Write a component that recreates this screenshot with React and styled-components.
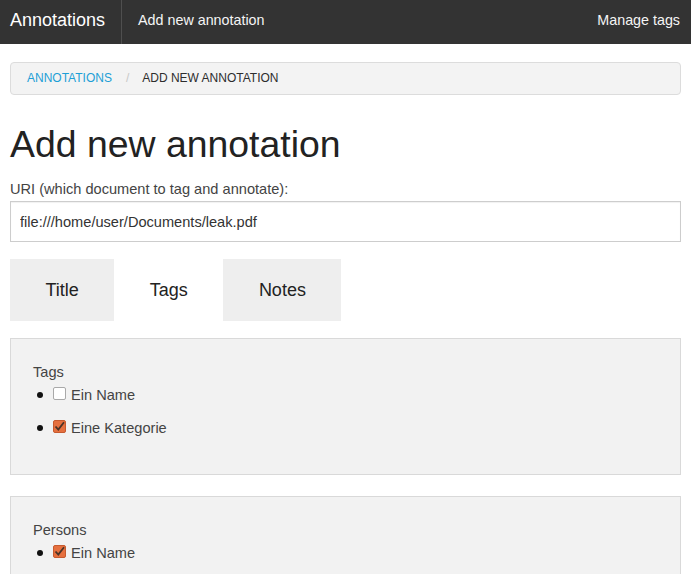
import React, { useState } from "react";
import styled, { createGlobalStyle } from "styled-components";

const GlobalStyle = createGlobalStyle`
  html, body {
    margin: 0;
    padding: 0;
    background: #fff;
    font-family: "Liberation Sans", Arial, Helvetica, sans-serif;
    font-size: 14.6px;
    color: #444;
  }
  * {
    box-sizing: border-box;
  }
`;

const Navbar = styled.nav`
  display: flex;
  align-items: stretch;
  height: 44px;
  background: #333;
  color: #fff;
`;

const Brand = styled.a`
  display: block;
  padding: 10px 16px 0 10px;
  font-size: 18px;
  line-height: 20px;
  color: #fff;
  text-decoration: none;
  border-right: 1px solid #4f4f4f;
`;

const NavLink = styled.a`
  display: block;
  padding: 10px ${(p) => (p.$right ? "11px" : "16px")} 0 16px;
  margin-left: ${(p) => (p.$right ? "auto" : "0")};
  font-size: 14.3px;
  line-height: 20px;
  color: #f5f5f5;
  text-decoration: none;
`;

const Container = styled.main`
  padding: 18px 10px 0;
`;

const Breadcrumb = styled.ol`
  display: flex;
  margin: 0;
  padding: 7px 16px;
  list-style: none;
  background: #f3f3f3;
  border: 1px solid #dcdcdc;
  border-radius: 4px;
  font-size: 12px;
  line-height: 17px;
  text-transform: uppercase;
`;

const Crumb = styled.li`
  color: ${(p) => (p.$active ? "#2d2d2d" : "#1e9fd6")};
  &:not(:first-child)::before {
    content: "/";
    color: #c8c8c8;
    margin: 0 13px 0 14px;
  }
`;

const Title = styled.h1`
  margin: 28px 0 13px;
  font-size: 37.4px;
  font-weight: normal;
  line-height: 43px;
  color: #222;
`;

const Label = styled.label`
  display: block;
  margin-bottom: 2px;
  line-height: 20px;
  color: #444;
`;

const TextInput = styled.input`
  display: block;
  width: 100%;
  height: 41px;
  padding: 6px 9px;
  border: 1px solid #cdcdcd;
  box-shadow: inset 0 1px 1px rgba(0, 0, 0, 0.06);
  font-family: inherit;
  font-size: 14.6px;
  color: #333;
  outline: none;
`;

const Tabs = styled.div`
  display: flex;
  margin: 17px 0;
`;

const Tab = styled.button`
  height: 62px;
  padding: 0 35.5px;
  border: none;
  background: ${(p) => (p.$active ? "#fff" : "#eee")};
  font-family: inherit;
  font-size: 18px;
  line-height: 20px;
  color: #222;
  cursor: pointer;
`;

const Panel = styled.fieldset`
  margin: 0 0 21px;
  padding: 23px 22px;
  background: #f2f2f2;
  border: 1px solid #d9d9d9;
  min-width: 0;
`;

const PanelTitle = styled.div`
  line-height: 20px;
  color: #444;
`;

const List = styled.ul`
  margin: 3px 0 0;
  padding: 0;
  list-style: none;
`;

const Item = styled.li`
  position: relative;
  display: flex;
  align-items: flex-start;
  height: 20px;
  margin-bottom: 13px;
  padding-left: 20px;
  line-height: 20px;
  color: #444;
  &::before {
    content: "";
    position: absolute;
    left: 4px;
    top: 7px;
    width: 6px;
    height: 6px;
    border-radius: 50%;
    background: #111;
  }
`;

const Box = styled.span`
  display: inline-flex;
  align-items: center;
  justify-content: center;
  flex: none;
  width: 13px;
  height: 13px;
  margin: 2px 5px 0 0;
  border-radius: 2px;
  border: 1px solid ${(p) => (p.$checked ? "#c65a2f" : "#a9a9a9")};
  background: ${(p) => (p.$checked ? "#e6703f" : "#fff")};
  cursor: pointer;
`;

const CheckItem = ({ label, checked, onToggle }) => (
  <Item>
    <Box $checked={checked} onClick={onToggle}>
      {checked && (
        <svg width="11" height="11" viewBox="0 0 11 11">
          <path d="M1.5 5.5 L4.3 8.6 L10 1.2" fill="none" stroke="#4b3428" strokeWidth="1.8" />
        </svg>
      )}
    </Box>
    {label}
  </Item>
);

export default function App() {
  const [tab, setTab] = useState("Tags");
  const [checks, setChecks] = useState({ name: false, kategorie: true, person: true });
  const toggle = (k) => setChecks({ ...checks, [k]: !checks[k] });

  return (
    <>
      <GlobalStyle />
      <Navbar>
        <Brand href="#">Annotations</Brand>
        <NavLink href="#">Add new annotation</NavLink>
        <NavLink href="#" $right>
          Manage tags
        </NavLink>
      </Navbar>
      <Container>
        <Breadcrumb>
          <Crumb>Annotations</Crumb>
          <Crumb $active>Add new annotation</Crumb>
        </Breadcrumb>
        <Title>Add new annotation</Title>
        <Label htmlFor="uri">URI (which document to tag and annotate):</Label>
        <TextInput id="uri" defaultValue="file:///home/user/Documents/leak.pdf" />
        <Tabs>
          {["Title", "Tags", "Notes"].map((t) => (
            <Tab key={t} $active={tab === t} onClick={() => setTab(t)}>
              {t}
            </Tab>
          ))}
        </Tabs>
        <Panel>
          <PanelTitle>Tags</PanelTitle>
          <List>
            <CheckItem label="Ein Name" checked={checks.name} onToggle={() => toggle("name")} />
            <CheckItem label="Eine Kategorie" checked={checks.kategorie} onToggle={() => toggle("kategorie")} />
          </List>
        </Panel>
        <Panel>
          <PanelTitle>Persons</PanelTitle>
          <List>
            <CheckItem label="Ein Name" checked={checks.person} onToggle={() => toggle("person")} />
          </List>
        </Panel>
      </Container>
    </>
  );
}
